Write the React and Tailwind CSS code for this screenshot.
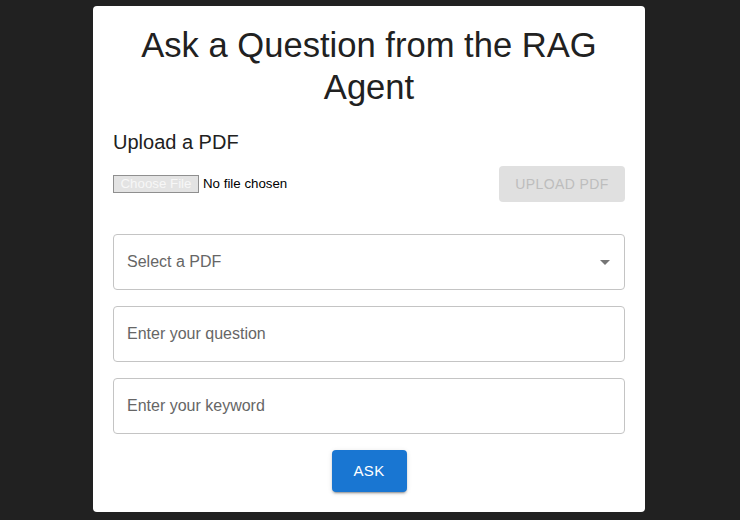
import React, { useState } from "react";

const RagAgent = () => {
    const [selectedPdf, setSelectedPdf] = useState("");
    const [question, setQuestion] = useState("");
    const [keyword, setKeyword] = useState("");

    return (
        <div className="min-h-[520px] bg-[#212121] pt-[6px] pr-[2px] pb-2 font-['Liberation_Sans',Arial,sans-serif]">
            <div className="mx-auto w-[552px] rounded bg-white p-5 text-[#212121]">
                <h1 className="-mt-[2px] text-center text-[34.6px] leading-[42px]">
                    Ask a Question from the RAG Agent
                </h1>

                {/* Upload section */}
                <h2 className="mt-[18px] text-[20px] leading-8">Upload a PDF</h2>
                <div className="mt-2 flex items-center justify-between">
                    <label className="flex items-center text-[13.3px] text-black">
                        <span className="flex h-[18px] w-[86px] items-center justify-center border border-[#8f8f8f] bg-[#e3e3e3] text-[#f7f7f7]">
                            Choose File
                        </span>
                        <span className="ml-1">No file chosen</span>
                        <input type="file" className="hidden" />
                    </label>
                    <button
                        disabled
                        className="h-[36px] w-[126px] rounded bg-[#e0e0e0] text-[14px] font-medium uppercase tracking-[0.4px] text-[#bdbdbd]"
                    >
                        Upload PDF
                    </button>
                </div>

                {/* Query fields */}
                <div className="mt-8 flex flex-col gap-4">
                    <div className="relative">
                        <select
                            value={selectedPdf}
                            onChange={(e) => setSelectedPdf(e.target.value)}
                            className="h-[56px] w-full appearance-none rounded border border-[#c4c4c4] bg-white px-[13px] text-[16px] text-[#666] outline-none"
                        >
                            <option value="">Select a PDF</option>
                        </select>
                        <svg
                            viewBox="0 0 24 24"
                            className="pointer-events-none absolute right-[8px] top-[16px] h-6 w-6 fill-[#757575]"
                        >
                            <path d="M7 10l5 5 5-5z" />
                        </svg>
                    </div>
                    <input
                        type="text"
                        value={question}
                        onChange={(e) => setQuestion(e.target.value)}
                        placeholder="Enter your question"
                        className="h-[56px] w-full rounded border border-[#c4c4c4] px-[13px] text-[16px] outline-none placeholder:text-[#666]"
                    />
                    <input
                        type="text"
                        value={keyword}
                        onChange={(e) => setKeyword(e.target.value)}
                        placeholder="Enter your keyword"
                        className="h-[56px] w-full rounded border border-[#c4c4c4] px-[13px] text-[16px] outline-none placeholder:text-[#666]"
                    />
                </div>

                <div className="mt-4 flex justify-center">
                    <button className="h-[42px] w-[75px] rounded bg-[#1976d2] text-[15px] font-medium uppercase tracking-[0.4px] text-white shadow-[0_3px_1px_-2px_rgba(0,0,0,0.2),0_2px_2px_0_rgba(0,0,0,0.14),0_1px_5px_0_rgba(0,0,0,0.12)]">
                        Ask
                    </button>
                </div>
            </div>
        </div>
    );
};

export default RagAgent;
